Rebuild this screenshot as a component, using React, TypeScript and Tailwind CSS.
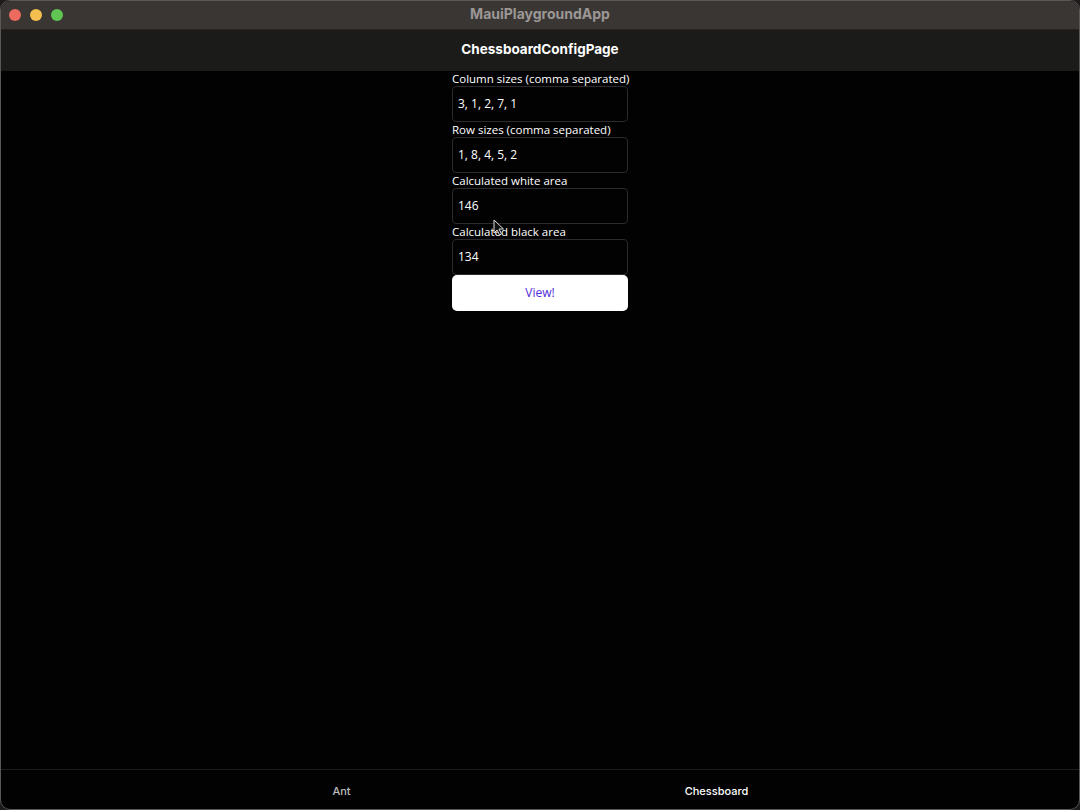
import React from "react";

const fields = [
  { label: "Column sizes (comma separated)", value: "3, 1, 2, 7, 1" },
  { label: "Row sizes (comma separated)", value: "1, 8, 4, 5, 2" },
  { label: "Calculated white area", value: "146" },
  { label: "Calculated black area", value: "134" },
];

export default function App() {
  return (
    <div className="w-[1080px] h-[810px] bg-[#1e1c1b] overflow-hidden">
      <div className="relative w-full h-full rounded-[10px] border border-[#5a5755] bg-[#020203] overflow-hidden flex flex-col">
        {/* Title bar */}
        <div className="h-[29px] shrink-0 bg-[#3a3634] border-b border-[#2a2220] flex items-center relative">
          <div className="flex items-center gap-[9px] pl-[8px]">
            <div className="w-[12px] h-[12px] rounded-full bg-[#ed6a5e]"></div>
            <div className="w-[12px] h-[12px] rounded-full bg-[#f5bf4f]"></div>
            <div className="w-[12px] h-[12px] rounded-full bg-[#61c554]"></div>
          </div>
          <div className="absolute inset-0 pb-[3px] flex items-center justify-center text-[14px] leading-none font-bold text-[#9b9795] font-['Inter',sans-serif]">
            MauiPlaygroundApp
          </div>
        </div>

        {/* Navigation bar */}
        <div className="h-[41px] shrink-0 pb-[2px] bg-[#1b1b19] flex items-center justify-center text-[13.5px] leading-none font-bold text-white font-['Inter',sans-serif]">
          ChessboardConfigPage
        </div>

        {/* Content */}
        <div className="flex-1 flex justify-center font-['Open_Sans',sans-serif]">
          <div className="w-[176px] flex flex-col">
            {fields.map((f) => (
              <div key={f.label} className="flex flex-col">
                <div className="h-[15px] text-[11.5px] leading-[15px] text-white whitespace-nowrap">{f.label}</div>
                <div className="h-[36px] rounded-[4px] border border-[#2b2b2d] flex items-center px-[5px] text-[12px] text-white">
                  {f.value}
                </div>
              </div>
            ))}
            <button className="h-[36px] rounded-[5px] bg-white text-[#512bd4] text-[12px]">View!</button>
          </div>
        </div>

        {/* Tab bar */}
        <div className="h-[40px] shrink-0 pt-[4px] border-t border-[#1d1d1f] flex items-center pl-[153px] text-[11px] leading-none font-medium font-['Inter',sans-serif]">
          <div className="w-[375px] text-center text-[#bdbdbd]">Ant</div>
          <div className="w-[375px] text-center text-white">Chessboard</div>
        </div>

        {/* Mouse cursor */}
        <svg className="absolute left-[492px] top-[218px]" width="12" height="17" viewBox="0 0 12 17">
          <path d="M1 1 L1 14 L4 11 L6.5 16 L8.5 15 L6 10 L10.5 10 Z" fill="#111" stroke="#ddd" strokeWidth="1" />
        </svg>
      </div>
    </div>
  );
}
